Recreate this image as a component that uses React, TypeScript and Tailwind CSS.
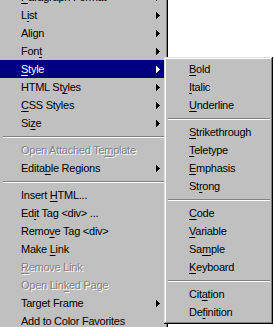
type Item =
  | { sep: true }
  | { sep?: false; label: string; u?: number; arrow?: boolean; disabled?: boolean; active?: boolean };

const mainItems: Item[] = [
  { label: "Paragraph Format", u: 0, arrow: true },
  { label: "List", u: 1, arrow: true },
  { label: "Align", arrow: true },
  { label: "Font", u: 3, arrow: true },
  { label: "Style", u: 0, arrow: true, active: true },
  { label: "HTML Styles", u: 7, arrow: true },
  { label: "CSS Styles", u: 0, arrow: true },
  { label: "Size", u: 2, arrow: true },
  { sep: true },
  { label: "Open Attached Template", u: 16, disabled: true },
  { label: "Editable Regions", u: 5, arrow: true },
  { sep: true },
  { label: "Insert HTML...", u: 7 },
  { label: "Edit Tag <div> ...", u: 2 },
  { label: "Remove Tag <div>", u: 4 },
  { label: "Make Link", u: 5 },
  { label: "Remove Link", u: 0, disabled: true },
  { label: "Open Linked Page", u: 8, disabled: true },
  { label: "Target Frame", arrow: true },
  { label: "Add to Color Favorites" },
];

const styleItems: Item[] = [
  { label: "Bold", u: 0 },
  { label: "Italic", u: 0 },
  { label: "Underline", u: 0 },
  { sep: true },
  { label: "Strikethrough", u: 0 },
  { label: "Teletype", u: 0 },
  { label: "Emphasis", u: 0 },
  { label: "Strong", u: 2 },
  { sep: true },
  { label: "Code", u: 0 },
  { label: "Variable", u: 0 },
  { label: "Sample", u: 2 },
  { label: "Keyboard", u: 0 },
  { sep: true },
  { label: "Citation", u: 3 },
  { label: "Definition", u: 2 },
];

// win98 style raised frame
const frame =
  "bg-[#c0c0c0] p-[3px] shadow-[inset_-1px_-1px_0_#000,inset_1px_1px_0_#dfdfdf,inset_-2px_-2px_0_#808080,inset_2px_2px_0_#fff]";

const Arrow = ({ color }: { color: string }) => (
  <svg width="4" height="7" viewBox="0 0 4 7" shapeRendering="crispEdges">
    <path d="M0 0h1v7H0z M1 1h1v5H1z M2 2h1v3H2z M3 3h1v1H3z" fill={color} />
  </svg>
);

const Label = ({ text, u }: { text: string; u?: number }) => {
  if (u === undefined || u < 0) return <>{text}</>;
  return (
    <>
      {text.slice(0, u)}
      <span className="underline decoration-1 underline-offset-[2px]">{text[u]}</span>
      {text.slice(u + 1)}
    </>
  );
};

const Menu = ({ items, textPad, sepPad }: { items: Item[]; textPad: string; sepPad: string }) => (
  <div className="flex flex-col">
    {items.map((item, i) =>
      item.sep ? (
        <div key={i} className={"pt-[4px] pb-[3px] " + sepPad}>
          <div className="h-px bg-[#808080]" />
          <div className="h-px bg-white" />
        </div>
      ) : (
        <div
          key={i}
          className={
            "flex h-[18px] items-center justify-between pr-[5px] leading-[18px] whitespace-nowrap " +
            textPad +
            (item.active ? " bg-[#000080] text-white" : item.disabled ? " text-[#808080] [text-shadow:1px_1px_0_#fff]" : " text-black")
          }
        >
          <span>
            <Label text={item.label} u={item.u} />
          </span>
          {item.arrow && <Arrow color={item.active ? "#fff" : "#000"} />}
        </div>
      )
    )}
  </div>
);

export default function App() {
  return (
    <div className="relative h-[327px] w-[274px] overflow-hidden bg-white font-['Liberation_Sans',Arial,sans-serif] text-[11px] tracking-[-0.25px]">
      <div className={"ml-[-3px] mt-[-15px] w-[171px] " + frame}>
        <Menu items={mainItems} textPad="pl-[21px]" sepPad="pl-[3px]" />
      </div>

      {/* Style submenu */}
      <div className={"absolute left-[164px] top-[57px] w-[109px] " + frame}>
        <Menu items={styleItems} textPad="pl-[22px]" sepPad="pl-px" />
      </div>
    </div>
  );
}
